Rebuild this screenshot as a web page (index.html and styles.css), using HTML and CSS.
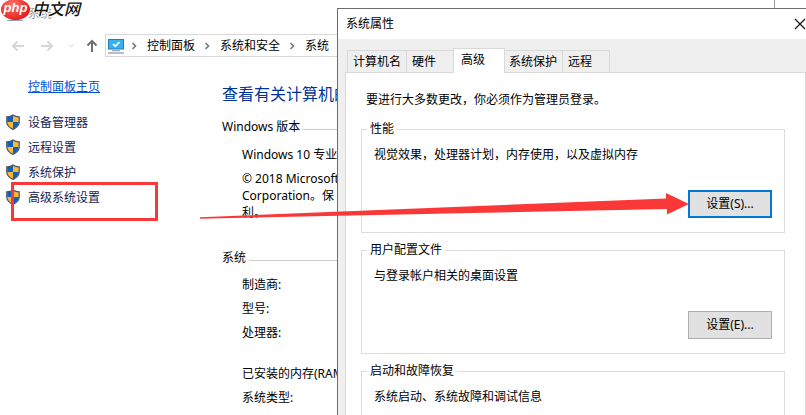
FILE: index.html
```html
<!DOCTYPE html>
<html lang="zh-CN">
<head>
<meta charset="utf-8">
<title>系统</title>
<link rel="stylesheet" href="styles.css">
</head>
<body>
<svg class="defs" aria-hidden="true">
  <defs>
    <clipPath id="shield-clip"><path d="M7 1.2C5.300 2.600 3.200 3 1.200 3v5c0 3.500 2.500 5.500 5.800 7.200C10.300 13.500 12.800 11.500 12.800 8V3C10.800 3 8.700 2.600 7 1.200z"/></clipPath>
    <symbol id="shield" viewBox="0 0 14 16">
      <g clip-path="url(#shield-clip)">
        <path fill="#0a63c4" d="M0 0h7v8H0zM7 8h7v8H7z"/>
        <path fill="#fdb931" d="M7 0h7v8H7zM0 8h7v8H0z"/>
      </g>
      <path fill="none" stroke="#4a5560" stroke-width="1.300" d="M7 1C5.300 2.400 3 2.900 .8 2.900V8c0 3.600 2.700 5.800 6.200 7.400C10.500 13.800 13.200 11.600 13.200 8V2.900C11 2.900 8.700 2.400 7 1z"/>
    </symbol>
    <symbol id="chevron" viewBox="0 0 6 8"><path fill="none" stroke="#777" stroke-width="1.600" d="M1.500 1l3 3-3 3"/></symbol>
  </defs>
</svg>

<div class="desktop">
  <main class="window">
    <header class="caption">
      <span class="caption-icon"></span>
      <span class="caption-text">系统</span>
    </header>

    <div class="toolbar">
      <button class="tool" aria-label="后退"><svg width="14" height="12" viewBox="0 0 14 12"><path d="M13 6H2M6.500 1.500L2 6l4.500 4.500"/></svg></button>
      <button class="tool" aria-label="前进"><svg width="14" height="12" viewBox="0 0 14 12"><path d="M1 6h11M7.500 1.500L12 6l-4.500 4.500"/></svg></button>
      <button class="tool small" aria-label="最近的位置"><svg width="8" height="6" viewBox="0 0 8 6"><path d="M1.500 1.500L4 4l2.500-2.500"/></svg></button>
      <button class="tool up" aria-label="上移"><svg width="12" height="14" viewBox="0 0 12 14"><path d="M6 13V2M1.500 6.500L6 2l4.500 4.500"/></svg></button>
      <nav class="address" aria-label="地址">
        <svg class="pc" width="16" height="16" viewBox="0 0 16 16"><path fill="#2a7ab8" d="M0 1h16v10.500H0z"/><path fill="#35b2f5" d="M1 2h14v8.500H1z"/><path fill="none" stroke="#fff" stroke-width="1.700" d="M5 6l2.300 2.200L11.500 4"/><path fill="#7d94a8" d="M4 12.200h8v1H4z"/><path fill="#93a6b8" d="M0 14.300h16v1.400H0z"/></svg>
        <svg class="first-chevron" width="6" height="8"><use href="#chevron"/></svg>
        <a href="#panel">控制面板</a>
        <svg class="chevron" width="6" height="8"><use href="#chevron"/></svg>
        <a href="#security">系统和安全</a>
        <svg class="chevron" width="6" height="8"><use href="#chevron"/></svg>
        <a href="#system">系统</a>
      </nav>
    </div>

    <div class="columns">
      <nav class="side">
        <a class="home" href="#home">控制面板主页</a>
        <a class="task" href="#devices"><svg width="14" height="16"><use href="#shield"/></svg>设备管理器</a>
        <a class="task" href="#remote"><svg width="14" height="16"><use href="#shield"/></svg>远程设置</a>
        <a class="task" href="#protection"><svg width="14" height="16"><use href="#shield"/></svg>系统保护</a>
        <a class="task" href="#advanced"><svg width="14" height="16"><use href="#shield"/></svg>高级系统设置</a>
      </nav>
      <section class="info">
        <h1>查看有关计算机的</h1>
        <h2>Windows 版本</h2>
        <div class="edition">
          <p>Windows 10 专业</p>
          <p>© 2018 Microsoft<br>Corporation。保<br>利。</p>
        </div>
        <h2>系统</h2>
        <ul class="specs">
          <li>制造商:</li>
          <li>型号:</li>
          <li>处理器:</li>
          <li class="memory">已安装的内存(RAM)</li>
          <li>系统类型:</li>
        </ul>
      </section>
    </div>
  </main>

  <div class="brand"><span class="brand-php">php</span><span class="brand-name">中文网</span></div>

  <section class="dialog" role="dialog" aria-labelledby="dialog-title">
    <header class="dialog-caption">
      <span id="dialog-title">系统属性</span>
      <button class="close" aria-label="关闭"><svg width="12" height="12" viewBox="0 0 12 12"><path d="M1 1l10 10M11 1L1 11"/></svg></button>
    </header>
    <div class="dialog-body">
      <div class="tabs" role="tablist">
        <button class="tab" role="tab">计算机名</button>
        <button class="tab wide" role="tab">硬件</button>
        <button class="tab active" role="tab" aria-selected="true">高级</button>
        <button class="tab" role="tab">系统保护</button>
        <button class="tab wide" role="tab">远程</button>
      </div>
      <div class="panel" role="tabpanel">
        <p class="notice">要进行大多数更改，你必须作为管理员登录。</p>
        <fieldset>
          <legend>性能</legend>
          <p>视觉效果，处理器计划，内存使用，以及虚拟内存</p>
          <button class="push default">设置(S)...</button>
        </fieldset>
        <fieldset>
          <legend>用户配置文件</legend>
          <p>与登录帐户相关的桌面设置</p>
          <button class="push">设置(E)...</button>
        </fieldset>
        <fieldset>
          <legend>启动和故障恢复</legend>
          <p>系统启动、系统故障和调试信息</p>
        </fieldset>
      </div>
    </div>
  </section>

  <div class="highlight"></div>
  <svg class="arrow" width="490" height="24" viewBox="0 0 490 24" aria-hidden="true"><path fill="#fb3838" d="M0 25.300L466 6.500V1l23 11-22 10.500V17L0 26.700z"/></svg>
</div>
</body>
</html>
```
FILE: styles.css
```css
* { box-sizing: border-box; }

body {
  margin: 0;
  background: #fff;
  color: #000;
  font: 12px/16px "Noto Sans", "Noto Sans CJK SC", sans-serif;
}

h1, h2, p, ul { margin: 0; padding: 0; font-weight: normal; }
button { font: inherit; color: inherit; padding: 0; border: 0; background: none; }
a { color: inherit; text-decoration: none; }
.defs { position: absolute; width: 0; height: 0; }

.desktop {
  position: relative;
  height: 100vh;
  overflow: hidden;
}

/* System window */
.window {
  min-height: 100%;
  margin-right: 31px;
  border-right: 1px solid #999;
}

.caption {
  display: flex;
  align-items: center;
  gap: 5px;
  height: 34px;
  padding: 0 7px 6px;
  color: #999;
}
.caption-icon { width: 16px; height: 13px; border-bottom: 1px solid #8fa3b8; }

.toolbar { display: flex; align-items: center; height: 23px; padding-left: 11px; }
.tool { display: flex; width: 14px; margin-right: 15px; }
.tool path { fill: none; stroke: #d6d6d6; stroke-width: 2; }
.tool.small { width: 8px; margin: 0 11px 0 -2px; }
.tool.small path { stroke-width: 1; }
.tool.up { width: 12px; margin-right: 7px; }
.tool.up path { stroke: #707070; }

.address {
  display: flex;
  flex: 1;
  align-items: center;
  height: 23px;
  padding-left: 2px;
  border: 1px solid #d9d9d9;
}
.first-chevron { margin: 0 10px 0 7px; }
.chevron { margin: 0 10px 0 9px; }

.columns { display: flex; }
.side { flex: none; width: 222px; padding: 22px 6px 0; color: #151c55; }
.home { display: block; margin: 0 0 15px 22px; color: #0050d8; text-decoration: underline; }
.task { display: flex; align-items: center; gap: 8px; height: 25px; }
.task svg { margin-bottom: 2px; }

.info { flex: 1; padding-top: 25px; white-space: nowrap; }
h1 { margin-bottom: 13px; color: #039; font-size: 16px; line-height: 24px; }
h2 { display: flex; align-items: center; gap: 3px; font-size: 12px; }
h2::after { content: ""; flex: 1; height: 1px; margin-top: 4px; background: #ccc; }
.edition { padding: 11px 0 29px 20px; line-height: 17px; }
.edition p + p { margin-top: 7px; }
.specs { padding: 7px 0 0 20px; line-height: 24px; list-style: none; }
.specs .memory { margin-top: 17px; }

/* Site mark in the corner */
.brand { position: absolute; top: -2px; left: 1px; display: flex; align-items: center; gap: 2px; font-style: italic; }
.brand-php {
  width: 29px;
  height: 21px;
  border-radius: 50%;
  background: radial-gradient(circle at 40% 25%, #ff7066, #e81c1c 75%);
  color: #fff;
  font: italic 700 13px/17px "Liberation Sans", sans-serif;
  text-align: center;
}
.brand-name {
  color: #111;
  font-size: 16px;
  font-weight: 500;
  line-height: 23px;
  text-shadow: 1px 0 #fff, -1px 0 #fff, 0 1px #fff, 0 -1px #fff;
}

/* Properties dialog */
.dialog {
  position: absolute;
  top: 8px;
  left: 337px;
  right: 0;
  border: solid #6c6c6c;
  border-width: 1px 0 0 1px;
  background: #efefef;
}
.dialog-caption {
  display: flex;
  align-items: center;
  justify-content: space-between;
  height: 30px;
  padding-left: 8px;
  background: #fff;
}
.close { display: flex; }
.close path { stroke: #111; stroke-width: 1.2; }

.dialog-body { padding: 9px 0 0 7px; }
.tabs { display: flex; align-items: flex-end; height: 24px; padding-left: 2px; }
.tab {
  height: 22px;
  padding: 0 5px;
  border: solid #d9d9d9;
  border-width: 1px 0 0 1px;
  text-align: left;
}
.tab.wide { padding-right: 17px; }
.tab:last-child { border-right-width: 1px; }
.tab.active { z-index: 1; height: 25px; margin-bottom: -1px; padding: 0 19px 3px 7px; border-right-width: 1px; background: #fff; }
.tab.active + .tab { padding-left: 4px; border-left: 0; }

.panel { padding: 19px 20px 24px 15px; border: 1px solid #d9d9d9; background: #fff; }
.notice { margin: 0 0 13px 5px; }
fieldset {
  display: flex;
  flex-direction: column;
  min-width: 0;
  height: 112px;
  margin: 0 0 9px;
  padding: 10px 12px 14px;
  border: 1px solid #dcdcdc;
}
legend { margin-left: -7px; padding: 0 3px; }
.push {
  width: 84px;
  height: 28px;
  margin: auto 0 0 auto;
  border: 1px solid #adadad;
  background: #e1e1e1;
}
.push.default { border: 2px solid #0078d7; }

/* Callouts */
.highlight { position: absolute; top: 182px; left: 11px; width: 147px; height: 39px; border: 3px solid #fb3838; }
.arrow { position: absolute; top: 192px; left: 200px; overflow: visible; }
```
